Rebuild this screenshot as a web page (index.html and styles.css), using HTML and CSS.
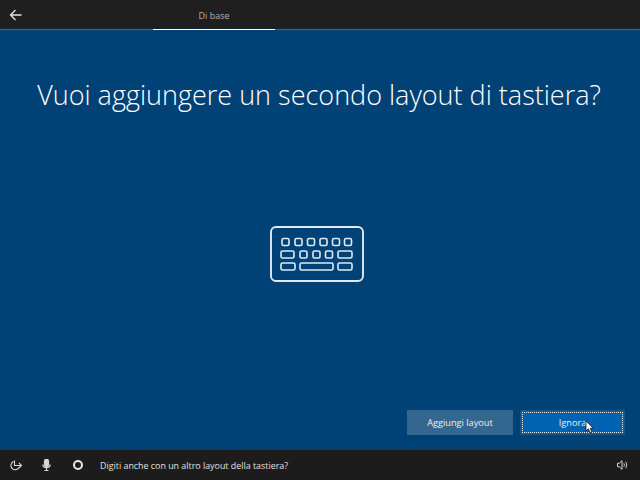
FILE: index.html
```html
<!DOCTYPE html>
<html lang="it">
<head>
<meta charset="utf-8">
<title>Di base</title>
<link rel="stylesheet" href="styles.css">
</head>
<body>
<div class="screen">
  <header class="topbar">
    <svg class="back" width="14" height="12" viewBox="0 0 14 12"><path d="M12.5 6H1.5M6.5 1l-5 5 5 5" fill="none" stroke="#e4e4e4" stroke-width="1.3"/></svg>
    <div class="tab">Di base</div>
  </header>
  <main class="main">
    <h1 class="title">Vuoi aggiungere un secondo layout di tastiera?</h1>
    <svg class="keyboard" width="94" height="56" viewBox="0 0 94 56" fill="none" stroke="#dcebf5" stroke-width="1.6">
      <rect x="1" y="1" width="92" height="54" rx="5" stroke-width="1.9"/>
      <rect x="12" y="12.5" width="7" height="7" rx="1.6"/>
      <rect x="25" y="12.5" width="7" height="7" rx="1.6"/>
      <rect x="37.5" y="12.5" width="7" height="7" rx="1.6"/>
      <rect x="50" y="12.5" width="7" height="7" rx="1.6"/>
      <rect x="62.5" y="12.5" width="7" height="7" rx="1.6"/>
      <rect x="74.5" y="12.5" width="7" height="7" rx="1.6"/>
      <rect x="11" y="25" width="13" height="7" rx="1.6"/>
      <rect x="30" y="25" width="7" height="7" rx="1.6"/>
      <rect x="43" y="25" width="7" height="7" rx="1.6"/>
      <rect x="55.5" y="25" width="7" height="7" rx="1.6"/>
      <rect x="68" y="25" width="14" height="7" rx="1.6"/>
      <rect x="11" y="37" width="14" height="7" rx="1.6"/>
      <rect x="30" y="37" width="33" height="7" rx="1.6"/>
      <rect x="68" y="37" width="14" height="7" rx="1.6"/>
    </svg>
    <div class="actions">
      <button class="btn btn-secondary">Aggiungi layout</button>
      <button class="btn btn-primary"><span class="focus">Ignora</span></button>
    </div>
    <svg class="cursor" width="10" height="14" viewBox="0 0 10 14"><path d="M1 1v10l2.4-2.2L5 12.6l1.8-.8L5.2 8.2H8.4z" fill="#fff" stroke="#111" stroke-width=".8"/></svg>
  </main>
  <footer class="bottombar">
    <svg class="ico ico-ease" width="12" height="11" viewBox="0 0 12 11" fill="none" stroke="#d8d8d8" stroke-width="1.1"><path d="M3.5 1.5A4.3 4.3 0 1 0 9 7.5"/><path d="M4.5 .5v5h7M9 3l2.5 2.5L9 8"/></svg>
    <svg class="ico ico-mic" width="9" height="12" viewBox="0 0 9 12" fill="none" stroke="#d8d8d8" stroke-width="1.2"><rect x="2.5" y=".5" width="4" height="7" rx="1.5" fill="#d8d8d8"/><path d="M.8 5.5c0 4.2 7.4 4.2 7.4 0M4.5 9v2.5M2.5 11.5h4"/></svg>
    <span class="cortana"></span>
    <span class="prompt">Digiti anche con un altro layout della tastiera?</span>
    <svg class="ico ico-vol" width="11" height="10" viewBox="0 0 11 10" fill="none" stroke="#d8d8d8" stroke-width="1"><path d="M.5 3.3v3.4h1.8L5 9.3V.7L2.3 3.3zM6.8 3.3c.7.9.7 2.5 0 3.4M8.6 1.8c1.4 1.8 1.4 4.6 0 6.4"/></svg>
  </footer>
</div>
</body>
</html>
```
FILE: styles.css
```css
html, body { margin: 0; padding: 0; }
.screen {
  width: 640px; height: 480px; display: flex; flex-direction: column;
  overflow: hidden; background: #004275; color: #fff;
  font-family: "Open Sans", "Noto Sans", sans-serif;
}
.topbar {
  height: 29px; flex: none; background: #1f1f1f; border-bottom: 1px solid #5a5f63;
  position: relative; box-sizing: content-box;
}
.back { position: absolute; left: 9px; top: 9px; }
.tab {
  position: absolute; left: 153px; top: 0; width: 122px; height: 30px; box-sizing: border-box;
  border-bottom: 1.5px solid #fff; text-align: center; font-size: 9px; line-height: 32px; color: #b0b0b0;
}
.main { flex: 1; position: relative; display: flex; flex-direction: column; align-items: center; }
.title { margin: 47px 0 0 -2px; font-size: 27px; line-height: 36px; font-weight: 300; white-space: nowrap; color: #fff; }
.keyboard { margin: 113px 0 0 -6px; display: block; }
.actions { margin-top: auto; margin-bottom: 15px; align-self: flex-end; display: flex; gap: 7px; padding-right: 15px; }
.btn {
  width: 106px; height: 25px; padding: 0; border: 0; color: #f0f0f0; font: inherit; font-size: 9.2px;
}
.btn-secondary { background: #33678f; }
.btn-primary { background: #0063b1; border: 1px solid #14558a; padding: 1px; width: 105px; box-sizing: border-box; }
.focus {
  display: flex; align-items: center; justify-content: center; height: 100%; box-sizing: border-box;
  border: 1px dotted #e6eef5;
}
.cursor { position: absolute; left: 585px; top: 390px; }
.bottombar { height: 30px; flex: none; background: #1c1c1c; display: flex; align-items: center; }
.ico-ease { margin-left: 10px; }
.ico-mic { margin-left: 20px; }
.cortana { width: 6px; height: 6px; margin-left: 22px; border: 2px solid #e8e8e8; border-radius: 50%; }
.prompt { margin-left: 17px; font-size: 8.9px; color: #e0e0e0; }
.ico-vol { margin-left: auto; margin-right: 12px; }
```
